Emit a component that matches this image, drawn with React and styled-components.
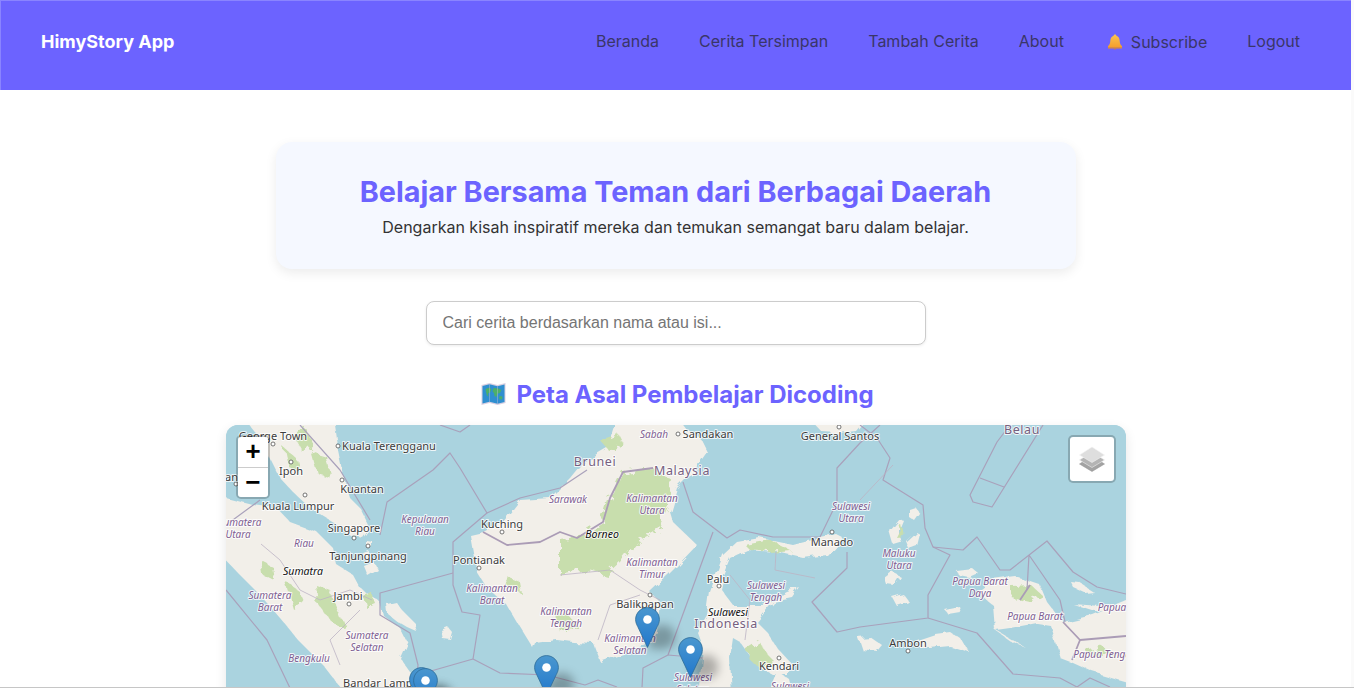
import React from "react"
import styled, { createGlobalStyle } from "styled-components"

const GlobalStyle = createGlobalStyle`
  * {
    box-sizing: border-box;
  }
  html,
  body {
    margin: 0;
    height: 100%;
    overflow: hidden;
    background: #fafafa;
    font-family: "Inter", "Liberation Sans", sans-serif;
  }
`

const NAV_LINKS = ["Beranda", "Cerita Tersimpan", "Tambah Cerita", "About"]

const LAND = [
  "M243 417L263 442L270 458L280 478L293 492L310 508L333 522L350 535L363 538L370 528L360 508L350 498L343 475L337 445L333 417Z",
  "M218 496L253 505L277 508L290 522L317 532L333 548L337 565L353 575L360 588L380 602L383 615L400 628L407 642L400 658L410 672L417 696L347 696L323 665L300 642L280 618L257 592L240 575L218 552Z",
  "M387 604L396 602L404 612L414 622L417 632L408 628L398 622L388 614Z",
  "M441 630L448 627L453 633L451 640L443 639Z",
  "M366 540L372 541L372 547L366 546Z",
  "M362 552L368 550L370 558L364 560Z",
  "M364 566L374 562L378 570L368 576Z",
  "M560 488L570 478L583 462L607 448L617 417L677 417L687 430L700 438L707 452L693 472L677 488L670 512L673 522L697 545L678 565L668 575L650 592L660 602L657 632L650 643L637 650L620 655L600 662L593 643L573 642L557 640L535 643L533 648L517 622L507 605L487 588L477 572L473 552L470 535L483 532L503 522L520 500L550 498Z",
  "M808 417L822 432L838 433L856 431L868 417Z",
  "M737 542L760 538L793 545L820 538L837 535L843 538L827 555L803 558L777 552L747 550L730 558L723 575L720 588L733 605L763 605L787 592L800 588L793 598L773 602L757 622L767 632L777 648L793 665L787 675L773 675L760 668L747 652L740 642L733 638L730 658L732 696L698 696L703 648L697 632L707 615L710 592L717 572L723 555Z",
  "M768 696L778 672L790 680L794 696Z",
  "M893 544L889 530L899 518L904 521L899 533L903 541Z",
  "M909 509L915 507L920 514L915 521L909 517Z",
  "M906 541L916 532L920 534L917 546L909 549Z",
  "M884 578L892 572L900 576L894 585L886 584Z",
  "M892 597L903 594L909 602L897 606Z",
  "M858 638L870 637L883 646L878 652L862 650Z",
  "M917 640L935 634L950 632L962 640L969 652L950 646L930 648L920 648Z",
  "M943 608L958 605L960 612L948 614Z",
  "M956 570L972 568L979 574L970 578L960 576Z",
  "M993 580L1016 577L1040 585L1047 602L1057 615L1063 622L1093 615L1134 598L1134 684L1093 672L1073 663L1060 658L1053 635L1050 625L1037 623L1010 628L996 630L1016 642L1026 648L1012 642L995 630L993 605L977 592Z",
  "M1071 582L1080 583L1094 592L1085 593L1074 588Z",
  "M1073 604L1100 606L1134 604L1134 612L1095 611Z",
]

const FOREST = [
  "M603 522L610 498L623 472L653 468L672 480L668 506L658 530L636 542L622 560L606 575L586 570L560 575L560 540L577 538Z",
  "M292 432L306 428L314 446L304 454Z",
  "M312 452L326 456L332 478L318 474Z",
  "M284 448L296 458L300 474L288 466Z",
  "M316 585L330 590L338 610L345 628L332 622L318 604Z",
  "M286 582L298 590L304 604L294 610Z",
  "M260 560L272 566L274 580L262 574Z",
  "M363 596L372 593L376 604L366 608Z",
  "M745 545L770 540L790 550L770 552L750 550Z",
  "M745 648L758 640L768 655L778 665L762 668L750 660Z",
  "M1010 585L1030 584L1042 595L1030 602L1012 598Z",
  "M1085 650L1100 646L1115 654L1090 656Z",
  "M600 440L618 434L624 446L610 452Z",
  "M556 610L568 615L580 628L560 632Z",
  "M505 575L518 580L520 592L508 588Z",
  "M897 538L903 526L905 537Z",
]

const SEA_BOUNDARIES = [
  "M380 535L387 502L433 470L450 453L460 468L487 513L520 498L560 488L587 470",
  "M487 513L453 542L453 585L462 612L480 615L473 659L500 673L547 675L585 685L598 680L617 687",
  "M453 573L380 593L380 615L410 633L418 665L417 675L473 659",
  "M683 482L693 512L727 538L740 530L773 537L820 537L837 502L837 468L860 443L880 425",
  "M713 532L668 655L643 668L642 688",
  "M668 655L703 658",
  "M847 552L847 568L812 602L837 632L860 627L928 618L928 595L950 555L933 547L925 528L923 505L883 480L890 458L877 438L860 425",
  "M933 547L963 550L977 537L1000 570L1010 570L1047 541L1073 572L1097 587L1126 594",
  "M928 618L977 633L1013 674L1060 678L1077 687L1090 678L1110 687",
  "M1043 425L992 507L973 502L970 495L997 442L1010 425",
  "M980 478L1004 487",
  "M1029 555L1027 590M1029 555L1060 600L1065 622",
  "M226 525L260 500M226 590L267 640L290 688",
  "M440 425L460 432L470 425M300 425L340 470L370 520",
]

const INNER_BORDERS = [
  "M483 532L507 545L540 542L560 532L577 538L603 522L610 498L623 472L653 468",
  "M1020 600L1030 585M1063 622L1080 640L1072 660M1080 640L1126 636",
]

const REGION_LINES = [
  "M261 544L280 560L300 590L320 600L350 590L372 600",
  "M360 610L330 640L340 665",
  "M560 575L610 570L640 590L660 600",
  "M598 640L610 605L640 595",
  "M730 575L750 600L745 640",
  "M776 552L775 570L815 578",
  "M893 465L860 500",
]

const CITIES = [
  ["Medan", 220, 481],
  ["George Town", 273, 440],
  ["Kuala Terengganu", 389, 450],
  ["Ipoh", 291, 475],
  ["Kuantan", 362, 493],
  ["Kuala Lumpur", 298, 510],
  ["Singapore", 354, 532],
  ["Tanjungpinang", 368, 560],
  ["Kuching", 502, 528],
  ["Pontianak", 479, 564],
  ["Jambi", 348, 600],
  ["Bandar Lampung", 388, 687],
  ["Sandakan", 708, 438],
  ["General Santos", 840, 440],
  ["Manado", 832, 546],
  ["Palu", 718, 583],
  ["Balikpapan", 645, 608],
  ["Kendari", 779, 670],
  ["Ambon", 908, 647],
]

const REGIONS = [
  ["Sumatera", 240, 526],
  ["Utara", 238, 538],
  ["Riau", 304, 547],
  ["Kepulauan", 425, 523],
  ["Riau", 425, 535],
  ["Sumatera", 270, 599],
  ["Barat", 270, 611],
  ["Sumatera", 367, 639],
  ["Selatan", 367, 651],
  ["Bengkulu", 309, 662],
  ["Sarawak", 568, 503],
  ["Sabah", 654, 438],
  ["Kalimantan", 652, 502],
  ["Utara", 652, 514],
  ["Kalimantan", 652, 566],
  ["Timur", 652, 578],
  ["Kalimantan", 492, 592],
  ["Barat", 492, 604],
  ["Kalimantan", 566, 615],
  ["Tengah", 566, 627],
  ["Kalimantan", 630, 642],
  ["Selatan", 630, 654],
  ["Sulawesi", 766, 589],
  ["Tengah", 766, 601],
  ["Sulawesi", 851, 510],
  ["Utara", 851, 522],
  ["Maluku", 899, 557],
  ["Utara", 899, 569],
  ["Papua Barat", 980, 585],
  ["Daya", 980, 597],
  ["Papua Barat", 1035, 620],
  ["Papua", 1112, 611],
  ["Papua Tengah", 1105, 658],
  ["Sulawesi", 693, 681],
  ["Selatan", 693, 693],
  ["Sulawesi", 790, 690],
]

const COUNTRIES = [
  ["Brunei", 595, 466],
  ["Malaysia", 682, 475],
  ["Indonesia", 726, 628],
  ["Belau", 1022, 434],
]

const ISLANDS = [
  ["Sumatra", 303, 575],
  ["Borneo", 602, 538],
  ["Sulawesi", 728, 616],
]

const TOWN_DOTS = [
  [236, 484], [273, 444], [338, 446], [291, 462], [342, 480], [305, 495],
  [354, 538], [368, 546], [502, 532], [479, 568], [349, 604], [678, 434],
  [839, 427], [832, 532], [719, 586], [650, 595], [779, 658], [908, 651],
]

const MARKERS = [
  [409, 667],
  [413, 668],
  [534, 655],
  [635, 607],
  [678, 637],
]

const BellIcon = () => (
  <Bell viewBox="0 0 16 16">
    <defs>
      <linearGradient id="bell-fill" x1="0" y1="0" x2="0" y2="1">
        <stop offset="0" stopColor="#fcc44f" />
        <stop offset="1" stopColor="#f59d2c" />
      </linearGradient>
    </defs>
    <path
      d="M8 .5c.8 0 1.300.5 1.400 1.300C11.500 2.500 12.500 4.200 12.700 7c.1 2.300.7 3.700 2.300 5.300v1.200H1v-1.200C2.600 10.700 3.200 9.300 3.300 7c.2-2.800 1.200-4.500 3.300-5.200C6.700 1 7.200.5 8 .5z"
      fill="url(#bell-fill)"
    />
    <path d="M1 13.300h14v1.200H1z" fill="#e88f26" />
    <path d="M6.500 14.500h3L8 15.800z" fill="#d9822b" />
  </Bell>
)

const WorldMapIcon = () => (
  <MapGlyph viewBox="0 0 26 24">
    <path d="M1 3l8-2 8 2 8-2v20l-8 2-8-2-8 2z" fill="#d9cfe0" />
    <path d="M2 4l7-1.700 8 2 7-1.700v17.400l-7 1.700-8-2-7 1.700z" fill="#2f8fd0" />
    <path
      d="M5 7l4-1.500 2 2-1.500 3-2 1 .5 3-1.500-1-1-3.500zM13 6l5 .500 3 1.500-1.500 3-2.500 .500-1 3.500-2-1-.5-3-1.500-1.500zM19 14l3 .500-.5 3-3-.500z"
      fill="#4caf6a"
    />
    <path d="M9 2.300v18M17 4.300v18" stroke="#c9c0d6" strokeWidth=".6" opacity=".7" />
  </MapGlyph>
)

const PinIcon = ({ id }) => (
  <svg width="25" height="41" viewBox="0 0 25 41">
    <defs>
      <linearGradient id={id} x1="0" y1="0" x2="0" y2="1">
        <stop offset="0" stopColor="#4a97cf" />
        <stop offset="1" stopColor="#2278cc" />
      </linearGradient>
    </defs>
    <path
      d="M12.500 .6C5.900 .6.600 5.900.600 12.500c0 2.500.8 4.700 2.100 7L12.500 40.400l9.800-20.900c1.300-2.300 2.100-4.500 2.100-7C24.400 5.900 19.100.6 12.500.6z"
      fill={`url(#${id})`}
      stroke="#2e6c97"
      strokeWidth=".8"
    />
    <circle cx="12.500" cy="12.500" r="4.300" fill="#fff" />
  </svg>
)

const LayersIcon = () => (
  <svg width="26" height="26" viewBox="0 0 26 26">
    <path d="M13 10L25.500 18 13 25.500 .5 18z" fill="#a3a3a3" stroke="#8c8c8c" strokeWidth=".5" />
    <path d="M13 6L25.500 14 13 21.500 .5 14z" fill="#b4b4b4" stroke="#efefef" strokeWidth=".6" />
    <path d="M13 1L25.500 9 13 16.500 .5 9z" fill="#dedede" stroke="#f3f3f3" strokeWidth=".6" />
  </svg>
)

const LabelGroup = ({ items, Label }) =>
  items.map(([text, x, y]) => (
    <Label key={`${text}-${x}-${y}`} x={x} y={y}>
      {text}
    </Label>
  ))

const MapDrawing = () => (
  <MapSvg viewBox="226 425 900 263">
    <defs>
      {/* rough coastlines, the polygons alone look too straight */}
      <filter id="coast" filterUnits="userSpaceOnUse" x="200" y="400" width="960" height="310">
        <feTurbulence type="fractalNoise" baseFrequency="0.07" numOctaves="3" seed="4" />
        <feDisplacementMap in="SourceGraphic" scale="8" />
      </filter>
      <filter id="forest" filterUnits="userSpaceOnUse" x="200" y="400" width="960" height="310">
        <feTurbulence type="fractalNoise" baseFrequency="0.1" numOctaves="3" seed="9" />
        <feDisplacementMap in="SourceGraphic" scale="13" />
        <feGaussianBlur stdDeviation="0.5" />
      </filter>
    </defs>
    <rect x="226" y="425" width="900" height="263" fill="#aad3df" />
    <g filter="url(#coast)">
      {LAND.map((d) => (
        <path key={d} d={d} fill="#f2efe9" />
      ))}
    </g>
    <g filter="url(#forest)">
      {FOREST.map((d) => (
        <path key={d} d={d} fill="#c8dead" />
      ))}
    </g>
    {SEA_BOUNDARIES.map((d) => (
      <BoundaryLine key={d} d={d} />
    ))}
    {REGION_LINES.map((d) => (
      <RegionLine key={d} d={d} />
    ))}
    {INNER_BORDERS.map((d) => (
      <InnerBorder key={d} d={d} />
    ))}
    {TOWN_DOTS.map(([cx, cy]) => (
      <circle key={`${cx}-${cy}`} cx={cx} cy={cy} r="2" fill="#fff" stroke="#555" strokeWidth=".8" />
    ))}
    <LabelGroup items={REGIONS} Label={RegionLabel} />
    <LabelGroup items={CITIES} Label={CityLabel} />
    <LabelGroup items={COUNTRIES} Label={CountryLabel} />
    <LabelGroup items={ISLANDS} Label={IslandLabel} />
  </MapSvg>
)

const App = () => {
  return (
    <>
      <GlobalStyle />
      <Window>
        <Page>
          <Header>
            <Brand>HimyStory App</Brand>
            <Nav>
              {NAV_LINKS.map((link) => (
                <NavLink key={link}>{link}</NavLink>
              ))}
              <SubscribeLink>
                <BellIcon />
                Subscribe
              </SubscribeLink>
              <NavLink>Logout</NavLink>
            </Nav>
          </Header>
          <Main>
            <Hero>
              <HeroTitle>Belajar Bersama Teman dari Berbagai Daerah</HeroTitle>
              <HeroText>
                Dengarkan kisah inspiratif mereka dan temukan semangat baru dalam belajar.
              </HeroText>
            </Hero>
            <SearchInput placeholder="Cari cerita berdasarkan nama atau isi..." />
            <SectionTitle>
              <WorldMapIcon />
              Peta Asal Pembelajar Dicoding
            </SectionTitle>
            <MapCard>
              <MapDrawing />
              {MARKERS.map(([x, y], index) => (
                <Marker key={`${x}-${y}`} $x={x - 226} $y={y - 425}>
                  <MarkerShadow />
                  <PinIcon id={`pin-${index}`} />
                </Marker>
              ))}
              <ZoomControl>
                <ZoomButton>+</ZoomButton>
                <ZoomButton>−</ZoomButton>
              </ZoomControl>
              <LayersControl>
                <LayersIcon />
              </LayersControl>
            </MapCard>
          </Main>
        </Page>
      </Window>
    </>
  )
}

const Window = styled.div`
  height: 688px;
  border-bottom: 1px solid #c6c6c6;
  overflow: hidden;
`

const Page = styled.div`
  width: 1351px;
  height: 687px;
  background: #fff;
  overflow: hidden;
`

const Header = styled.header`
  height: 90px;
  display: flex;
  align-items: center;
  justify-content: space-between;
  padding: 0 51px 8px 40px;
  background: #6c63ff;
  border-top: 1px solid #8a84ff;
  border-left: 1px solid #8a84ff;
`

const Brand = styled.div`
  color: #fff;
  font-size: 18px;
  font-weight: 700;
`

const Nav = styled.nav`
  display: flex;
  align-items: center;
  gap: 40px;
  padding-bottom: 2px;
`

const NavLink = styled.a`
  color: #3a3668;
  font-size: 16px;
  line-height: 24px;
`

const SubscribeLink = styled(NavLink)`
  display: flex;
  align-items: center;
  gap: 8px;
  margin-left: 3px;
  padding-top: 2px;
`

const Bell = styled.svg`
  width: 16px;
  height: 16px;
`

const Main = styled.main`
  display: flex;
  flex-direction: column;
  align-items: center;
`

const Hero = styled.section`
  width: 800px;
  height: 127px;
  margin-top: 52px;
  padding-top: 32px;
  text-align: center;
  background: #f5f8ff;
  border-radius: 16px;
  box-shadow: 0 4px 12px rgba(0, 0, 0, 0.08);
`

const HeroTitle = styled.h1`
  margin: 0 0 5px;
  color: #6c63ff;
  font-size: 28.8px;
  line-height: 35px;
  font-weight: 700;
`

const HeroText = styled.p`
  margin: 0;
  color: #333;
  font-size: 16px;
  line-height: 26px;
`

const SearchInput = styled.input`
  width: 500px;
  height: 44px;
  margin-top: 32px;
  padding: 0 16px;
  font-family: "Liberation Sans", Arial, sans-serif;
  font-size: 16px;
  background: #fff;
  border: 1px solid #ccc;
  border-radius: 8px;
  box-shadow: 0 1px 3px rgba(0, 0, 0, 0.08);
  &::placeholder {
    color: #757575;
  }
`

const SectionTitle = styled.h2`
  display: flex;
  align-items: center;
  gap: 9px;
  height: 30px;
  margin: 34px 0 16px 3px;
  color: #6c63ff;
  font-size: 24px;
  font-weight: 700;
`

const MapGlyph = styled.svg`
  width: 27px;
  height: 24px;
`

const MapCard = styled.div`
  position: relative;
  flex-shrink: 0;
  width: 900px;
  height: 400px;
  background: #aad3df;
  border-radius: 12px;
  overflow: hidden;
  box-shadow: 0 4px 12px rgba(0, 0, 0, 0.1);
`

const MapSvg = styled.svg`
  display: block;
  width: 900px;
  height: 263px;
`

const BoundaryLine = styled.path`
  fill: none;
  stroke: #a9a1bb;
  stroke-width: 1.2;
  stroke-linejoin: round;
`

const RegionLine = styled.path`
  fill: none;
  stroke: #bdb4c4;
  stroke-width: 0.8;
`

const InnerBorder = styled.path`
  fill: none;
  stroke: #ab9cb6;
  stroke-width: 1.8;
  stroke-linejoin: round;
`

const MapLabel = styled.text`
  font-family: "Noto Sans", "Open Sans", sans-serif;
  text-anchor: middle;
  paint-order: stroke;
  stroke: rgba(255, 255, 255, 0.8);
  stroke-width: 2px;
  stroke-linejoin: round;
`

const CityLabel = styled(MapLabel)`
  fill: #3c3c3c;
  font-size: 11px;
`

const RegionLabel = styled(MapLabel)`
  fill: #7f5f92;
  font-size: 10px;
  font-style: italic;
`

const CountryLabel = styled(MapLabel)`
  fill: #76607f;
  font-size: 12.5px;
  letter-spacing: 0.6px;
`

const IslandLabel = styled(MapLabel)`
  fill: #111;
  font-size: 10.5px;
  font-style: italic;
`

const Marker = styled.div`
  position: absolute;
  left: ${(props) => props.$x}px;
  top: ${(props) => props.$y}px;
  width: 25px;
  height: 41px;
  svg {
    position: relative;
    display: block;
  }
`

const MarkerShadow = styled.div`
  position: absolute;
  left: 14px;
  top: 18px;
  width: 26px;
  height: 24px;
  background: rgba(0, 0, 0, 0.28);
  border-radius: 60% 50% 50% 10%;
  filter: blur(5px);
`

const ZoomControl = styled.div`
  position: absolute;
  left: 10px;
  top: 10px;
  display: flex;
  flex-direction: column;
  border: 2px solid rgba(0, 0, 0, 0.2);
  border-radius: 5px;
  background-clip: padding-box;
  overflow: hidden;
`

const ZoomButton = styled.div`
  width: 30px;
  height: 30px;
  padding: 1px 0 0 1px;
  color: #000;
  background: #fff;
  font-family: "Liberation Mono", monospace;
  font-size: 26px;
  font-weight: 700;
  line-height: 30px;
  text-align: center;
  & + & {
    border-top: 1px solid #ccc;
  }
`

const LayersControl = styled.div`
  position: absolute;
  right: 10px;
  top: 10px;
  display: flex;
  align-items: center;
  justify-content: center;
  width: 48px;
  height: 48px;
  background: #fff;
  background-clip: padding-box;
  border: 2px solid rgba(0, 0, 0, 0.2);
  border-radius: 5px;
`

export default App
